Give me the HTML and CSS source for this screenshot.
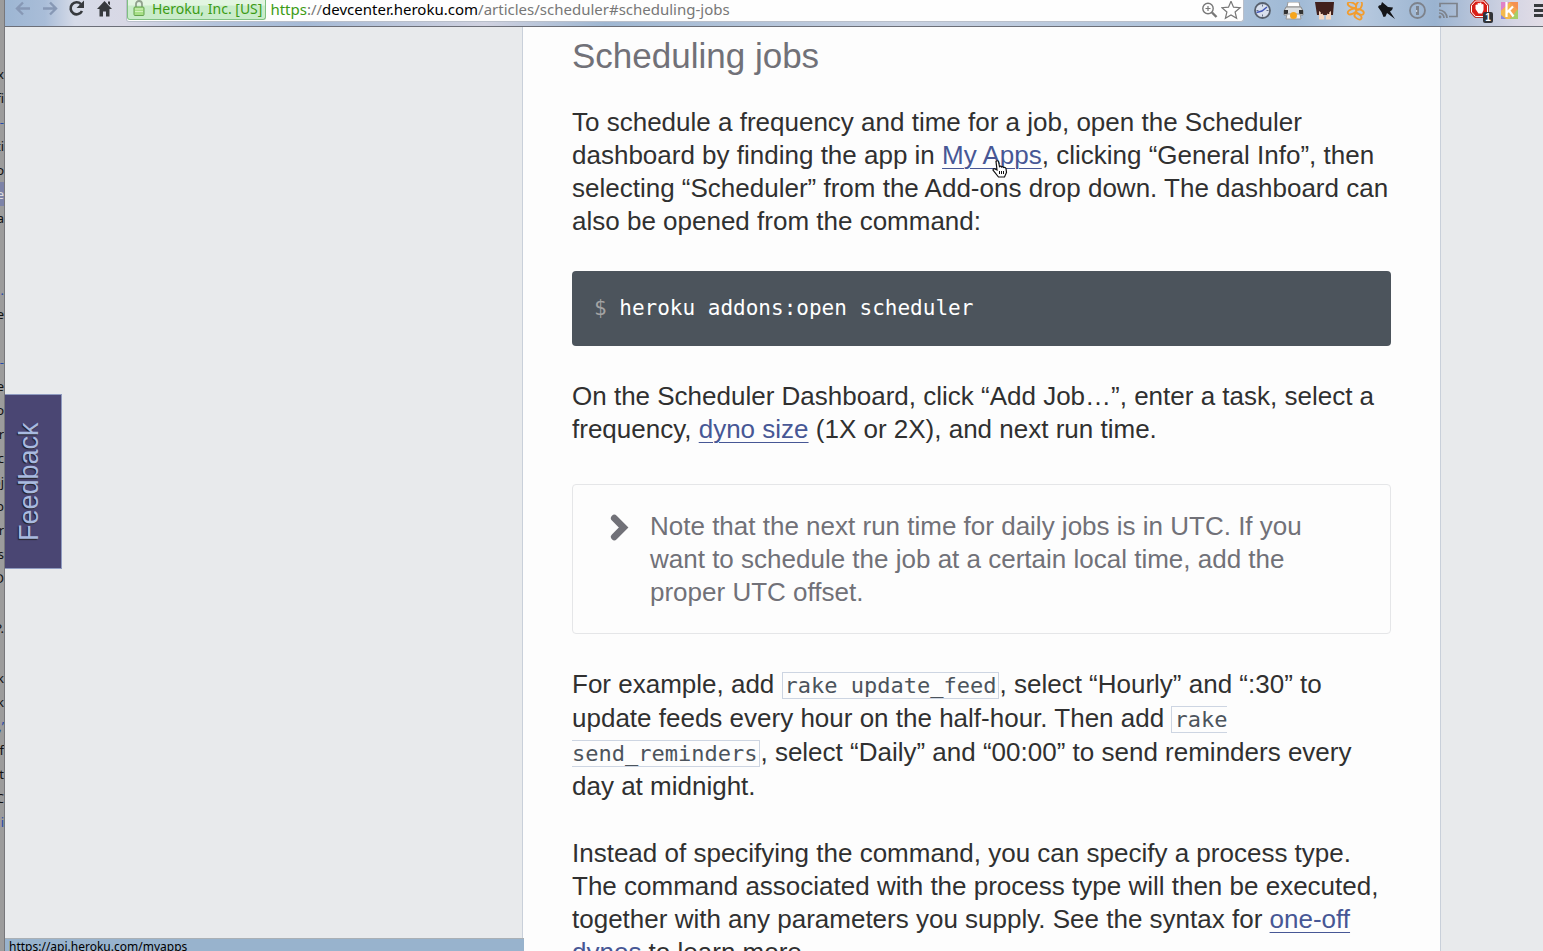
FILE: index.html
```html
<!DOCTYPE html>
<html lang="en">
<head>
<meta charset="utf-8">
<title>Heroku Scheduler | Heroku Dev Center</title>
<link rel="stylesheet" href="styles.css">
</head>
<body>
<div class="desktop">
  <div class="backdrop" aria-hidden="true">
    <span>x</span><span>fi</span><span class="blue">-</span><span>ti</span><span>o</span><span class="selected">e</span><span>a</span><span></span><span></span><span class="blue">.</span><span>e</span><span></span><span class="blue">-</span><span>e</span><span>o</span><span>r</span><span>c</span><span>oj</span><span>p</span><span>r</span><span>fs</span><span>D</span><span class="blank"></span><span>P.</span><span class="blank"></span><span>sk</span><span>ok</span><span class="blue">,’</span><span>f</span><span>t</span><span>AC</span><span class="blue">i</span>
  </div>
  <div class="browser">
    <header class="toolbar">
      <nav class="nav">
        <button class="tool" aria-label="Back" disabled><svg viewBox="0 0 28 19"><path d="M25 8.500H12M18 2.500l-6 6 6 6" fill="none" stroke="#8798b5" stroke-width="2.400"/></svg></button>
        <button class="tool" aria-label="Forward" disabled><svg viewBox="0 0 28 19"><path d="M10 8.500h13M17 2.500l6 6-6 6" fill="none" stroke="#8798b5" stroke-width="2.400"/></svg></button>
        <button class="tool" aria-label="Reload"><svg viewBox="0 0 28 19"><path d="M20 4.200A6 6 0 1 0 21 11" fill="none" stroke="#36393d" stroke-width="2.600"/><path d="M23 .5v7.500h-7.500z" fill="#36393d"/></svg></button>
        <button class="tool" aria-label="Home"><svg viewBox="0 0 28 19"><path d="m15.500 1 7.500 8h-2.500v7.500H17v-5h-3v5h-3.500V9H8zM19 1.500h2v4l-2-2z" fill="#36393d"/></svg></button>
      </nav>
      <div class="omnibox">
        <button class="identity"><svg class="lock" viewBox="0 0 12 17"><path d="M3 8V4a3 3 0 0 1 6 0v4" fill="none" stroke="#91a28e" stroke-width="1.800"/><rect x="1" y="7" width="10" height="8.500" rx="1" fill="#a7df87" stroke="#65a34f"/><path d="M2 9h8M2 11.500h8" stroke="#d2f2c0"/></svg>Heroku, Inc. [US]</button>
        <div class="address"><span class="secure">https</span><span class="muted">://</span>devcenter.heroku.com<span class="muted">/articles/scheduler#scheduling-jobs</span></div>
        <button class="small-tool" aria-label="Zoom"><svg viewBox="0 0 22 20"><circle cx="9" cy="7.500" r="5.200" fill="none" stroke="#777" stroke-width="1.400"/><path d="m13 11.500 4.500 4.500" stroke="#777" stroke-width="2.400"/><path d="M6.500 7.500h5M9 5v5" stroke="#777" stroke-width="1.200"/></svg></button>
        <button class="small-tool" aria-label="Bookmark"><svg viewBox="0 0 22 20"><path d="m10 .2 2.500 6 6.600.5-5 4.300 1.500 6.300-5.600-3.400-5.600 3.400 1.500-6.300-5-4.300 6.600-.5z" fill="#fff" stroke="#777" stroke-width="1.200"/></svg></button>
      </div>
      <div class="extensions">
        <button class="tool" aria-label="Clock"><svg viewBox="0 0 31 20"><circle cx="15.500" cy="8.500" r="7.500" fill="#d9e0ee" stroke="#58606d" stroke-width="1.800"/><path d="M15.500 2.500v2M15.500 12.500v2M9.500 8.500h2M19.500 8.500h2" stroke="#657089"/><path d="m20 5-5 4-5.500 1.500" fill="none" stroke="#4358b8" stroke-width="1.500"/></svg></button>
        <button class="tool" aria-label="Print"><svg viewBox="0 0 31 20"><path d="M10 0h11l1 5H9z" fill="#fff" stroke="#999"/><path d="M8 5h15l2 4v4H6V9z" fill="#dcdedf" stroke="#888"/><path d="M6 8h4v4H6zM21 8h4v4h-4z" fill="#333"/><path d="M9 12h13l1 5H8z" fill="#eee" stroke="#999"/><circle cx="15.500" cy="13.500" r="3.500" fill="#f6a51c"/></svg></button>
        <button class="tool" aria-label="Avatar"><svg viewBox="0 0 31 20"><path d="M6 0h19l-1 13H8z" fill="#41201d"/><path d="M10 17.500V9l3 2 2 3v3.500zM22 17.500V9l-3 2-2 3v3.500z" fill="#f5d6c1"/><path d="M12.500 8v4M19.500 8v4" stroke="#41201d" stroke-width="1.500"/></svg></button>
        <button class="tool" aria-label="Links"><svg viewBox="0 0 31 20"><g fill="none" stroke="#f29c2e" stroke-width="1.800"><ellipse cx="12" cy="3" rx="4.500" ry="2.300" transform="rotate(25 12 3)"/><ellipse cx="19" cy="3.500" rx="2.700" ry="4.500" transform="rotate(20 19 3.500)"/><ellipse cx="12" cy="9.500" rx="4.500" ry="2.300" transform="rotate(-25 12 9.500)"/><ellipse cx="20" cy="10" rx="4" ry="2.300" transform="rotate(25 20 10)"/><ellipse cx="18" cy="14.500" rx="4" ry="2.300" transform="rotate(35 18 14.500)"/></g></svg></button>
        <button class="tool" aria-label="Pin"><svg viewBox="0 0 31 20"><path d="m11 0 6 5 5 .5-1 2.500-2 1.500 5 7.500-8-6-1.500 3.500-2 .5-2-5L7 5l1-1.500 2-.5z" fill="#141518"/></svg></button>
        <button class="tool" aria-label="Password"><svg viewBox="0 0 31 20"><circle cx="15.500" cy="8.500" r="7.500" fill="none" stroke="#7d828b" stroke-width="1.800"/><path d="M14 4h3v9h-3z" fill="#7d828b"/><path d="M14 8h1.200v2H14z" fill="#c4cddd"/></svg></button>
        <button class="tool" aria-label="Cast"><svg viewBox="0 0 31 20"><path d="M7 5V1.500h17v13h-8" fill="none" stroke="#7d828b" stroke-width="1.700"/><path d="M6 8a8 8 0 0 1 8 8M6 11a5 5 0 0 1 5 5" fill="none" stroke="#7d828b" stroke-width="1.700"/><circle cx="7" cy="15" r="1.400" fill="#7d828b"/></svg></button>
        <button class="tool" aria-label="Ad blocker, 1 blocked"><svg viewBox="0 0 31 24"><path d="M11 0h9l4.500 5v7.500L20 17.500h-9l-4.500-5V5z" fill="#d91f18" stroke="#b0362e"/><path d="M11.500 1h8l4 4.500V12l-4 4.500h-8l-4-4.500V5.500z" fill="none" stroke="#fff"/><path d="M11.500 9V5q1-1 2 0V3.500q1-1 2 0V3q1-1 2 0v1.500q1-1 2 0V10l-1.500 3.500h-3.500z" fill="#fff"/></svg><span class="badge">1</span></button>
        <button class="tool" aria-label="Klout"><svg viewBox="0 0 31 20"><path d="M6 0h17v17H6z" fill="#f5a24d"/><path d="M6 0h9L6 9z" fill="#df83c8"/><path d="M6 9l9-9v17H6z" fill="#f3b94c"/><path d="M15 17 23 7v10z" fill="#a6ce67"/><path d="M6 13l5 4H6z" fill="#8c89db"/><path d="M15 0h8v8z" fill="#f5904f"/><path d="M11.500 0v15M12 10.500l6-6M14 8.500l4.500 6" fill="none" stroke="#fff" stroke-width="2.200"/></svg></button>
        <button class="tool" aria-label="Menu"><svg viewBox="0 0 31 20"><path d="M8 3.500h16M8 8.500h16M8 13.500h16" stroke="#36393d" stroke-width="3"/></svg></button>
      </div>
    </header>
    <main class="viewport">
      <article class="article">
        <h1>Scheduling jobs</h1>
        <p>To schedule a frequency and time for a job, open the Scheduler<br>dashboard by finding the app in <a href="#apps">My Apps<svg class="cursor" viewBox="0 0 16 18" aria-hidden="true"><path d="M4 1.500q1.500-1.500 2.500 0l1 5q1-1 2 .5 1-1 2 .5 2-.5 2.500 1l.5 4-2 4.500H6.500L1 10q.5-2 2-1l2 1z" fill="#fff" stroke="#111" stroke-width="1.200"/><path d="M7.500 11v3M9.500 11v3M11.500 11v3" stroke="#111"/></svg></a>, clicking “General Info”, then<br>selecting “Scheduler” from the Add-ons drop down. The dashboard can<br>also be opened from the command:</p>
        <pre class="terminal"><code><span class="prompt">$</span> heroku addons:open scheduler</code></pre>
        <p>On the Scheduler Dashboard, click “Add Job…”, enter a task, select a<br>frequency, <a href="#dyno">dyno size</a> (1X or 2X), and next run time.</p>
        <aside class="note">
          <svg class="chevron" viewBox="0 0 18 26"><path d="m4 4 9 9-9 9" fill="none" stroke="#717178" stroke-width="6.500" stroke-linecap="round"/></svg>
          <p>Note that the next run time for daily jobs is in UTC. If you<br>want to schedule the job at a certain local time, add the<br>proper UTC offset.</p>
        </aside>
        <p class="with-code">For example, add <code>rake update_feed</code>, select “Hourly” and “:30” to<br>update feeds every hour on the half-hour. Then add <code>rake<br>send_reminders</code>, select “Daily” and “00:00” to send reminders every<br>day at midnight.</p>
        <p>Instead of specifying the command, you can specify a process type.<br>The command associated with the process type will then be executed,<br>together with any parameters you supply. See the syntax for <a href="#one-off">one-off<br>dynos</a> to learn more.</p>
      </article>
      <button class="feedback">Feedback</button>
      <div class="status">https://api.heroku.com/myapps</div>
    </main>
  </div>
</div>
</body>
</html>
```
FILE: styles.css
```css
* { box-sizing: border-box; }
body { margin: 0; font-family: "Liberation Sans", Arial, sans-serif; }
button { margin: 0; padding: 0; border: 0; background: none; font: inherit; }
svg { display: block; }

.desktop { display: flex; height: 100vh; overflow: hidden; }
.backdrop {
  flex: 0 0 5px;
  padding-top: 62px;
  overflow: hidden;
  background: #9c9c9c;
  border-right: 1px solid #77777b;
  color: #111;
  font: 13px/24px "Noto Sans", sans-serif;
}
.backdrop span { display: flex; justify-content: flex-end; height: 24px; }
.backdrop .blank { height: 26px; }
.backdrop .blue { color: #2449a8; }
.backdrop .selected { background: #7d83a8; color: #ddd; }

.browser { flex: 1; min-width: 0; display: flex; flex-direction: column; }
.toolbar {
  flex: none;
  display: flex;
  align-items: flex-start;
  height: 27px;
  border-bottom: 1px solid #6c6f78;
  background: linear-gradient(90deg, #9db6d3 0, #a9bdd8 40px, #d6dbe8 70px, #d8d8e5 120px, #b4c4dc 210px, #a5bad6 300px, #d0d2e0 480px, #9fb7d2 600px, #c8d1e1 900px, #a9c0d9 1240px, #9fb9d5 1290px, #b9cbe0 1350px, #9ab3d0 1430px, #d6d6e4 1510px, #e2dde6 100%);
}
.nav { display: flex; padding-right: 9px; }
.nav svg { width: 28px; height: 19px; }
.tool { position: relative; }
.omnibox {
  flex: 1;
  min-width: 0;
  display: flex;
  height: 22px;
  background: #fefefe;
  border: 1px solid #b9bfca;
  border-top: 0;
  border-radius: 0 0 3px 3px;
}
.identity {
  display: flex;
  align-items: center;
  gap: 7px;
  height: 20px;
  padding: 0 3px 2px 5px;
  border: 1px solid #7fc081;
  border-top: 0;
  border-radius: 0 0 3px 3px;
  background: linear-gradient(#e2f5e1 0 5px, #c9ecca 6px);
  color: #3c9b14;
  white-space: nowrap;
  font: 14px/18px "Noto Sans", sans-serif;
}
.lock { width: 12px; height: 17px; }
.address {
  flex: 1;
  min-width: 0;
  padding-left: 4px;
  overflow: hidden;
  white-space: nowrap;
  color: #000;
  font: 15px/18px "Noto Sans", sans-serif;
}
.secure { color: #3c9b14; }
.muted { color: #777; }
.small-tool svg { width: 22px; height: 20px; }
.extensions { display: flex; flex: 0 0 296px; margin-left: 3px; overflow: hidden; }
.extensions .tool { flex: 0 0 31px; height: 24px; }
.extensions svg { width: 31px; }
.badge {
  position: absolute;
  left: 19px;
  top: 12px;
  width: 10px;
  height: 11px;
  border-radius: 2px;
  background: #303338;
  color: #fff;
  text-align: center;
  font: bold 10px/11px "Liberation Sans", sans-serif;
}

.viewport {
  position: relative;
  flex: 1;
  min-height: 0;
  display: grid;
  grid-template-columns: 517fr 919fr 102fr;
  overflow: hidden;
  background: #e8eaec;
}
.article {
  grid-column: 2;
  align-self: start;
  padding: 9px 49px;
  background: #fdfdfd;
  border: solid #c9d0da;
  border-width: 0 1px;
  color: #303030;
  font-size: 26px;
  line-height: 33px;
  white-space: nowrap;
}
.article h1 { margin: 0 0 30px; color: #717178; font-size: 35px; font-weight: 400; line-height: 40px; }
.article p { margin: 0 0 33px; }
.article a { position: relative; color: #475795; text-decoration: underline; text-decoration-thickness: 1px; text-underline-offset: 4px; }
.cursor { position: absolute; left: 50px; top: 20px; width: 16px; height: 18px; }
.terminal {
  margin: 0 0 34px;
  padding: 21px 22px;
  border-radius: 4px;
  background: #4c545c;
  color: #fff;
  font: 21px/33px "DejaVu Sans Mono", monospace;
}
.terminal code { font: inherit; }
.prompt { color: #a3a3a3; }
.article .note {
  display: flex;
  gap: 21px;
  margin: 38px 0 33px;
  padding: 25px 37px 24px;
  border: 1px solid #e5e6e8;
  border-radius: 4px;
  color: #717178;
}
.note .chevron { flex: none; width: 19px; height: 27px; margin-top: 4px; }
.note p { margin: 0; }
.article .with-code { margin-bottom: 34px; line-height: 34px; }
.with-code code {
  padding: 0 2px;
  border: 1px solid #cdd5e2;
  color: #4c545c;
  font: 22px/26px "DejaVu Sans Mono", monospace;
}
.feedback {
  position: absolute;
  left: 0;
  top: 367px;
  width: 57px;
  height: 175px;
  padding-left: 8px;
  border: 1px solid #8f9bc0;
  border-right: 0;
  background: #4a4673;
  color: #a9bae0;
  text-shadow: -1px -1px 1px #222;
  font-size: 27px;
  writing-mode: vertical-rl;
  transform: rotate(180deg);
}
.status {
  position: absolute;
  left: 0;
  bottom: 0;
  width: 519px;
  height: 13px;
  padding-left: 4px;
  overflow: hidden;
  border-top: 1px solid #aab0b5;
  background: #98b3cd;
  color: #000;
  font: 12px/16px "Noto Sans", sans-serif;
}
```
